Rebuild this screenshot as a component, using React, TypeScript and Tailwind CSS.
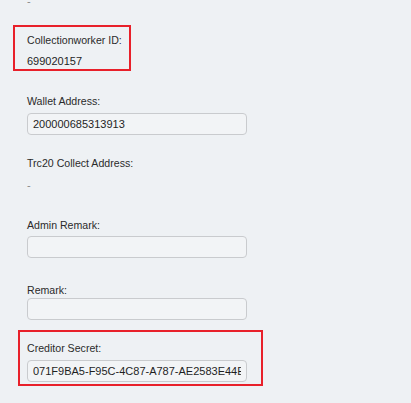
import React from 'react';

const Field = ({ label, children, top }: { label: string; children: React.ReactNode; top: string }) => (
  <div className={top}>
    <div className="text-[10.6px] leading-[16px] text-[#2b2b2b]">{label}</div>
    {children}
  </div>
);

const Box = ({ value, gap }: { value: string; gap: string }) => (
  <input
    readOnly
    value={value}
    className={`${gap} block w-[220px] h-[22px] px-[5px] bg-[#f2f4f6] border border-[#c9cbce] rounded-[4px] text-[11px] text-[#1f1f1f] outline-none`}
  />
);

export default function App() {
  return (
    <div
      className="w-[411px] h-[403px] overflow-hidden bg-[#eef1f4]"
      style={{ fontFamily: '"Liberation Sans", Arial, sans-serif' }}
    >
      <div className="pl-[27px] mt-[-7px] leading-[16px] text-[11px] text-[#8a8a8a]">-</div>

      {/* highlighted: worker id */}
      <div className="mt-[16px] ml-[13px] w-[118px] border-2 border-[#e8202a] pl-[12px] pt-[5px]">
        <div className="text-[10.6px] leading-[16px] text-[#2b2b2b]">Collectionworker ID:</div>
        <div className="mt-[6px] text-[11px] leading-[15px] text-[#1f1f1f]">699020157</div>
      </div>

      <div className="pl-[27px]">
        <Field label="Wallet Address:" top="mt-[22px]">
          <Box value="200000685313913" gap="mt-[4px]" />
        </Field>

        <Field label="Trc20 Collect Address:" top="mt-[20px]">
          <div className="mt-[6px] text-[11px] leading-[16px] text-[#8a8a8a]">-</div>
        </Field>

        <Field label="Admin Remark:" top="mt-[24px]">
          <Box value="" gap="mt-[3px]" />
        </Field>

        <Field label="Remark:" top="mt-[24px]">
          <Box value="" gap="mt-0" />
        </Field>
      </div>

      {/* highlighted: secret */}
      <div className="mt-[10px] ml-[18px] w-[245px] border-2 border-[#e8202a] pl-[7px] pt-[8px] pb-[2px]">
        <div className="text-[10.6px] leading-[16px] text-[#2b2b2b]">Creditor Secret:</div>
        <Box value="071F9BA5-F95C-4C87-A787-AE2583E44E7B" gap="mt-[4px]" />
      </div>
    </div>
  );
}
